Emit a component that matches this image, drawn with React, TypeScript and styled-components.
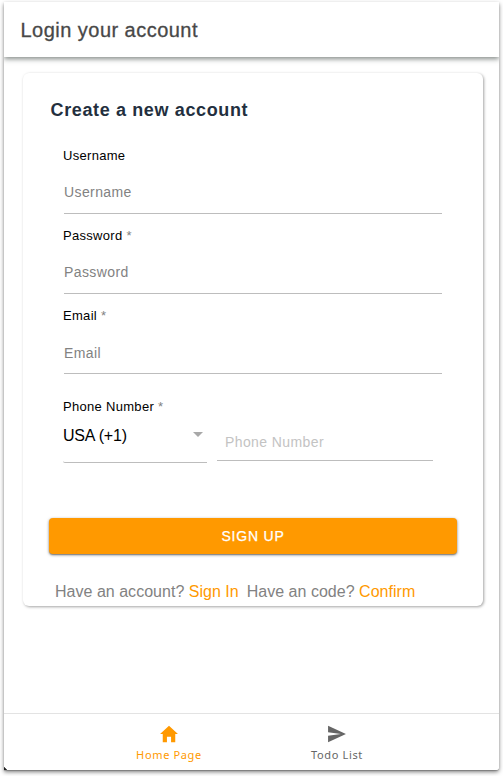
import React from "react";
import styled, { createGlobalStyle } from "styled-components";

const GlobalStyle = createGlobalStyle`
  * { box-sizing: border-box; }
  body {
    margin: 0;
    background: #fff;
    font-family: "Liberation Sans", Arial, sans-serif;
    -webkit-font-smoothing: antialiased;
  }
`;

const Stage = styled.div`
  height: 776px;
  padding: 2px 4px 6px;
  overflow: hidden;
`;

const Screen = styled.div`
  display: flex;
  flex-direction: column;
  height: 768px;
  background: linear-gradient(45deg, #222 2px, #fff 2.5px);
  border-radius: 0 0 3px 0;
  box-shadow: 0 2px 4px rgba(0, 0, 0, 0.5), 0 1px 1px rgba(0, 0, 0, 0.2);
`;

const Header = styled.header`
  height: 55px;
  flex: none;
  padding: 0 16.5px;
  background: #fff;
  box-shadow: 0 2px 5px rgba(20, 30, 25, 0.52);
  clip-path: inset(0 0 -10px 0);
`;

const Title = styled.h1`
  margin: 0;
  font-size: 20px;
  font-weight: 400;
  line-height: 56px;
  letter-spacing: 0.47px;
  color: #484848;
  -webkit-text-stroke: 0.3px #484848;
`;

const Content = styled.main`
  flex: 1;
  padding: 16px 16px 0 19px;
`;

const Card = styled.form`
  height: 533px;
  padding: 25px 26px 0;
  border-radius: 6px;
  background: #fff;
  box-shadow: 1px 1px 3px rgba(0, 0, 0, 0.36);
`;

const CardTitle = styled.h2`
  margin: 0 0 21px 1.5px;
  font-size: 18px;
  font-weight: 700;
  line-height: 24px;
  letter-spacing: 0.63px;
  color: #232f3e;
`;

const Fields = styled.div`
  padding: 0 15px 0 14px;
`;

const Field = styled.div<{ $height: number }>`
  height: ${(p) => p.$height}px;
`;

const Label = styled.label`
  display: block;
  height: 26px;
  font-size: 13px;
  line-height: 26px;
  letter-spacing: 0.3px;
  color: #000;
`;

const Required = styled.span`
  color: #828282;
`;

const Input = styled.input<{ $drop?: number }>`
  display: block;
  width: calc(100% - 1px);
  height: 45px;
  margin-left: 1px;
  padding: ${(p) => p.$drop ?? 0}px 0 0;
  border: 0;
  border-bottom: 1px solid #bdbdbd;
  outline: 0;
  background: transparent;
  font: 14px "Liberation Sans", Arial, sans-serif;
  letter-spacing: 0.4px;
  &::placeholder { color: #828282; opacity: 1; }
`;

const PhoneRow = styled.div`
  display: flex;
  gap: 10px;
  height: 43px;
`;

const CountrySelect = styled.div`
  display: flex;
  justify-content: space-between;
  width: 144px;
  height: 43px;
  padding-right: 4px;
  border-bottom: 1px solid #bdbdbd;
  border-radius: 2px 0 0 2px;
  font-size: 16px;
  line-height: 31px;
  letter-spacing: -0.2px;
  color: #000;
`;

const Caret = styled.span`
  margin-top: 12px;
  width: 0;
  height: 0;
  border: 5px solid transparent;
  border-top-color: #a8a8a8;
  border-bottom: 0;
`;

const PhoneInput = styled(Input)`
  width: 216px;
  height: 41px;
  margin: 0;
  padding: 3px 8px 0;
  &::placeholder { color: #c3c3c3; }
`;

const SubmitButton = styled.button`
  display: block;
  width: 408px;
  height: 36px;
  margin-top: 55px;
  padding: 0;
  border: 0;
  border-radius: 4px;
  background: #f90;
  box-shadow: 0 1px 3px rgba(0, 0, 0, 0.5), 0 1px 1px rgba(0, 0, 0, 0.2);
  font: 14px/36px "Liberation Sans", Arial, sans-serif;
  letter-spacing: 0.8px;
  color: #fff;
  -webkit-text-stroke: 0.25px #fff;
`;

const Links = styled.p`
  display: flex;
  gap: 8px;
  margin: 27px 0 0 6px;
  font-size: 16px;
  line-height: 21px;
  letter-spacing: 0.02px;
  color: #828282;
  white-space: nowrap;
`;

const Link = styled.a`
  color: #f90;
`;

const TabBar = styled.nav`
  display: flex;
  justify-content: center;
  height: 57px;
  flex: none;
  padding-left: 3px;
  border-top: 1px solid #e3e3e3;
`;

const Tab = styled.a<{ $active?: boolean }>`
  display: flex;
  flex-direction: column;
  align-items: center;
  width: 168px;
  padding-top: 9px;
  font: 11px/20px "Noto Sans", sans-serif;
  letter-spacing: 0.65px;
  color: ${(p) => (p.$active ? "#f90" : "#666")};
`;

const TabIcon = styled.svg`
  width: 22px;
  height: 22px;
  fill: currentColor;
`;

const credentials = [
  { name: "Username", required: false, height: 80, drop: 1 },
  { name: "Password", required: true, height: 80, drop: 1 },
  { name: "Email", required: true, height: 91, drop: 3 },
];

const tabs = [
  { name: "Home Page", active: true, path: "M208 448V320h96v128h97.6V256H464L256 64 48 256h62.4v192z" },
  { name: "Todo List", active: false, path: "M48 448l416-192L48 64v149.333L346 256 48 298.667z" },
];

export default function App() {
  return (
    <>
      <GlobalStyle />
      <Stage>
        <Screen>
          <Header>
            <Title>Login your account</Title>
          </Header>
          <Content>
            <Card>
              <CardTitle>Create a new account</CardTitle>
              <Fields>
                {credentials.map((c) => (
                  <Field key={c.name} $height={c.height}>
                    <Label>
                      {c.name} {c.required && <Required>*</Required>}
                    </Label>
                    <Input placeholder={c.name} $drop={c.drop} />
                  </Field>
                ))}
                <Label>
                  Phone Number <Required>*</Required>
                </Label>
                <PhoneRow>
                  <CountrySelect>
                    USA (+1)
                    <Caret />
                  </CountrySelect>
                  <PhoneInput placeholder="Phone Number" />
                </PhoneRow>
              </Fields>
              <SubmitButton type="button">SIGN UP</SubmitButton>
              <Links>
                <span>
                  Have an account? <Link>Sign In</Link>
                </span>
                <span>
                  Have an code? <Link>Confirm</Link>
                </span>
              </Links>
            </Card>
          </Content>
          <TabBar>
            {tabs.map((t) => (
              <Tab key={t.name} $active={t.active}>
                <TabIcon viewBox="0 0 512 512">
                  <path d={t.path} />
                </TabIcon>
                {t.name}
              </Tab>
            ))}
          </TabBar>
        </Screen>
      </Stage>
    </>
  );
}
